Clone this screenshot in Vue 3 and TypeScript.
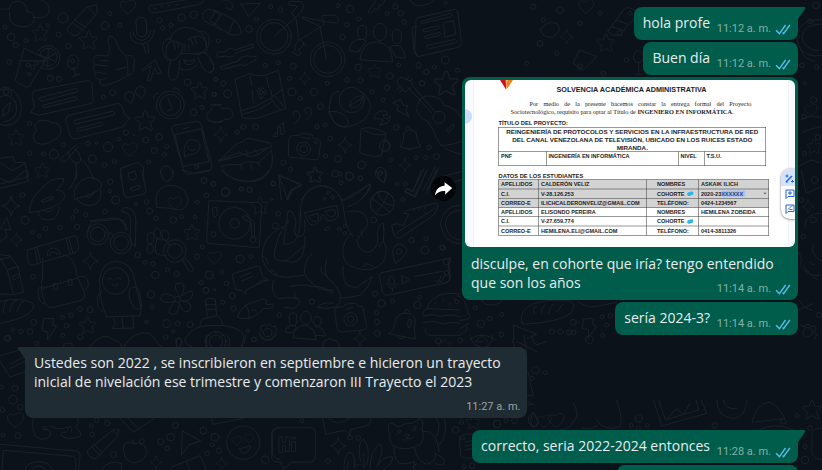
<script setup lang="ts">
interface Message {
  id: number
  out: boolean
  text: string
  time: string
  tail?: boolean
  media?: boolean
}

interface Patch {
  x: number
  y: number
  dots: number[][]
  stars: number[][]
  sparks: number[][]
  hearts: number[][]
  paths: string[]
}

const messages: Message[] = [
  { id: 1, out: true, text: 'hola profe', time: '11:12 a. m.', tail: true },
  { id: 2, out: true, text: 'Buen día', time: '11:12 a. m.' },
  { id: 3, out: true, text: 'disculpe, en cohorte que iría? tengo entendido que son los años', time: '11:14 a. m.', media: true },
  { id: 4, out: true, text: 'sería 2024-3?', time: '11:14 a. m.' },
  { id: 5, out: false, text: 'Ustedes son 2022 , se inscribieron en septiembre e hicieron un trayecto inicial de nivelación ese trimestre y comenzaron III Trayecto el 2023', time: '11:27 a. m.', tail: true },
  { id: 6, out: true, text: 'correcto, seria 2022-2024 entonces', time: '11:28 a. m.', tail: true },
]

const students = [
  { label: 'APELLIDOS', value: 'CALDERÓN VELIZ', label2: 'NOMBRES', value2: 'ASKAIK ILICH', shaded: true },
  { label: 'C.I.', value: 'V-28.126.253', label2: 'COHORTE', value2: '2020-23', marked: 'XXXXXX', pill: true, shaded: true },
  { label: 'CORREO-E', value: 'ILICHCALDERONVELIZ@GMAIL.COM', label2: 'TELÉFONO:', value2: '0424-1234567', shaded: true },
  { label: 'APELLIDOS', value: 'ELISONDO PEREIRA', label2: 'NOMBRES', value2: 'HEMILENA ZOBEIDA' },
  { label: 'C.I.', value: 'V-27.659.774', label2: 'COHORTE', value2: '', pill: true },
  { label: 'CORREO-E', value: 'HEMILENA.ELI@GMAIL.COM', label2: 'TELÉFONO:', value2: '0414-3811326' },
]

// Wallpaper patches; every patch is drawn at a third of its own units.
const patches: Patch[] = [
  {
    x: 0, y: 0,
    dots: [[189,54,15],[15,82,6],[33,111,11],[47,135,8],[78,121,6],[144,76,5],[176,104,8],[205,138,8],[315,77,12],[330,41,6],[360,76,6],[478,61,8],[488,84,6],[513,75,6],[545,53,11],[581,44,11],[28,186,7],[151,235,9],[177,237,8],[338,278,9],[310,291,6],[563,247,10],[648,238,6],[606,322,6],[581,337,10],[642,283,6],[89,371,6],[378,398,8],[357,418,5],[437,420,9],[478,411,10],[401,405,2],[264,431,7],[290,429,4],[324,441,14],[191,434,6],[162,463,14],[131,462,6],[89,461,6],[277,477,12],[314,494,7],[343,485,6],[463,452,9],[500,440,6],[493,464,6],[446,486,6],[218,183,6],[18,276,8],[590,501,6],[84,195,6],[98,202,6],[110,190,6],[88,222,5]],
    stars: [[121,100,24],[266,122,27],[436,363,30],[599,273,25],[48,414,24],[127,512,22]],
    sparks: [],
    hearts: [[385,20,24],[391,447,24]],
    paths: [
      'M0 28C10 26 20 26 27 29C28-4 80-8 81 36C104 34 112 60 92 74C76 86 45 80 34 66C28 56 27 46 29 36M81 0C90-10 150-4 148 30C146 50 125 58 99 51',
      'M204 82L262 21L290 14L292 40L237 101Q226 112 212 101Q198 92 204 82ZM216 67L249 91M223 59L256 82M262 21L287 45',
      'M72 146L46 240Q48 248 82 262Q90 260 94 248L139 178ZM62 182L132 183M113 154A36 36 0 1 1 123 202M119 164A27 27 0 1 1 127 192M145 145L143 202M120 165L167 184M122 185L168 160',
      'M204 185A16 16 0 1 1 234 187A16 16 0 1 1 204 185M220 202L228 225M216 230L240 222',
      'M324 167C336 145 320 126 326 112C335 102 347 115 351 132C359 156 384 167 382 184L384 225C364 240 337 251 316 256Q297 257 300 240C284 234 280 225 287 216C275 208 279 199 285 194C272 180 280 165 298 166ZM287 216L319 222M285 194L325 198M302 182L325 182M300 240L318 235M350 209L377 202M382 168Q400 162 403 178L401 212Q396 226 384 225',
      'M408 62A16 16 0 0 1 438 62L441 96A16 16 0 0 1 412 104ZM390 98Q390 131 427 132Q460 126 463 90M431 135L437 160M399 96Q404 120 427 121Q448 117 453 92M444 133L445 158',
      'M426 208L466 180L484 219L472 221L464 202L451 241L442 242L453 197L429 213Z',
      'M446 28Q446 14 460 16L590-6M447 30Q454 42 470 38L596 14Q614 7 610-3M462 26h8M482 20h8M503 17h8M525 15h8M608 44Q615 26 632 28L665 46M608 48Q606 60 620 66L665 90',
      'M510 120C516 92 543 78 570 84C600 90 620 110 618 136M504 182C480 160 480 112 513 116M596 94C630 90 636 120 616 160M498 168Q494 128 518 122L549 133Q548 170 520 180Q506 184 498 168M562 120Q600 92 620 128Q624 160 586 162M527 147L520 126M536 141L533 124M580 135L570 114M590 130L585 112M512 180Q496 230 516 241Q540 244 538 180M596 164Q622 142 640 195Q646 212 626 218Q608 212 594 172M538 205Q564 220 590 196M552 180Q568 188 584 178Q580 200 557 192ZM555 132v22M567 132v22M542 160L598 162',
      'M105 272L262 242Q274 241 276 253L280 300Q279 309 270 311L116 346L93 337L103 321L96 286Q97 276 105 272ZM120 293L230 265Q240 270 230 276L128 303Q116 304 120 293M128 316L226 290Q236 294 228 300L134 323Q124 324 128 316',
      'M207 346L355 310Q366 312 367 323L373 342L390 355L375 370Q373 380 365 382L225 417Q214 417 210 408L197 360Q197 348 207 346ZM224 361L338 334Q350 339 342 345L227 372Q216 368 224 361M234 385L302 367Q314 371 306 376L236 394Q226 392 234 385',
      'M388 305Q372 300 374 286Q384 268 399 279Q408 296 389 312M421 290Q404 286 407 270Q416 252 432 264Q444 276 422 298',
      'M469 315A42 42 0 1 0 553 315A42 42 0 1 0 469 315M479 315A32 32 0 1 0 543 315A32 32 0 1 0 479 315M504 296L516 326L503 334M462 297Q458 282 474 280M520 265Q534 260 539 275',
      'M0 268Q20 264 38 270Q64 290 64 324Q62 374 18 376L0 374M0 291Q30 274 48 310Q60 356 12 366M4 270Q2 258 20 262Q38 268 34 286M10 325L31 307L26 336L10 349Z',
      'M110 390Q96 380 114 364Q140 356 154 368Q184 366 182 395Q180 414 159 421Q137 440 108 428Q90 410 110 390',
      'M516 389Q512 380 523 376L590 364Q602 364 605 376L637 500Q635 510 625 514L564 523Q552 520 550 508ZM526 404L604 386L627 485L550 499ZM551 386L568 382M554 470Q545 430 572 418Q600 420 601 440Q596 464 570 464ZM561 438Q572 460 586 448M591 501L596 497',
      'M624 360Q612 344 632 331Q640 310 665 314M624 360Q640 370 665 366M0 475L39 470L45 488L74 487L86 530L0 552M0 488L37 512L76 490',
      'M182 475L230 434M182 475Q180 488 196 485L235 440M205 455Q210 484 228 490Q250 490 238 462L225 446M228 490L230 540M242 476Q264 490 282 540M362 505L413 487L430 500L432 540M362 505L364 540M384 520l22-7M480 520Q484 496 500 498Q520 504 519 528',
    ],
  },
  {
    x: 210, y: 0,
    dots: [[182,20,6],[211,30,7],[139,58,6],[117,87,10],[25,123,6],[384,17,6],[420,27,11],[446,57,6],[411,74,7],[398,111,8],[532,41,6],[556,20,8],[572,40,8],[582,66,7],[250,199,9],[205,188,6],[166,196,6],[239,235,6],[40,250,8],[18,239,6],[53,281,12],[14,283,6],[246,276,12],[312,276,11],[271,295,6],[352,250,6],[445,202,10],[451,241,8],[412,240,7],[539,228,10],[486,275,6],[519,299,6],[532,263,8],[566,195,6],[626,196,8],[649,216,8],[673,201,6],[706,180,12],[743,211,6],[636,250,8],[707,8,5],[331,320,9],[346,375,6],[321,380,6],[361,416,7],[100,381,8],[137,381,9],[82,397,6],[242,508,6],[221,488,8],[190,550,7],[46,576,12],[94,567,6],[119,569,8],[10,552,7],[347,468,6],[384,477,10],[376,521,10],[419,529,12],[451,535,7],[393,548,6],[455,495,12],[541,480,6],[511,519,7],[559,382,8],[618,473,6],[647,473,6],[657,443,7],[679,470,9],[586,552,6],[523,438,15],[687,352,18],[281,447,21],[281,447,11],[317,427,5],[154,277,6],[425,300,38],[192,110,52],[192,110,42],[353,178,52],[353,178,42]],
    stars: [[494,214,20],[709,251,36],[317,526,23]],
    sparks: [[285,236,20],[32,404,24],[405,435,24],[585,496,20]],
    hearts: [],
    paths: [
      'M92 12L152 10L115 50Q108 30 92 12ZM38 0Q58-2 70 18Q66 38 48 22M0 62L60 104Q80 108 95 100Q92 76 72 58L10 28M16 36L0 58M32 44L14 74M72 62L56 98',
      'M192 110L272 38Q288 14 272 5L240 4Q232 10 240 18Q252 12 262 20L244 38L258 54L266 122L332 80L276 54M330 80L349 176M332 82L342 72L338 56Q330 46 345 46L376 45Q390 55 382 68Q360 70 276 50M266 122Q250 136 256 150L248 158L266 168L272 157L264 148Q284 140 280 128M272 120L290 138',
      'M474 36L498 2M474 36Q484 42 488 34L494 25L504 30L508 16L520 12L524 0M600 0Q610 18 630 18Q660 14 672 0',
      'M490 96A20 26 0 1 1 530 96A20 26 0 1 1 490 96M443 97A14 17 0 1 1 470 97A14 17 0 1 1 443 97M547 110A14 17 0 1 1 574 110A14 17 0 1 1 547 110M450 178Q456 124 500 126Q548 130 548 185ZM418 151Q420 116 456 118Q474 122 466 130Q452 140 446 155ZM540 142Q550 134 564 136Q584 146 586 175L556 171Q552 152 540 142',
      'M620 54L736 28Q742 30 744 40L755 128Q752 140 744 142L624 170Q616 166 614 158ZM620 80L606 82L612 148L622 168M634 64L722 40Q732 44 724 50L640 70Q630 70 634 64M640 88L686 77Q694 82 686 86L644 96Q636 94 640 88M646 108L690 97Q698 102 690 106L650 115Q640 114 646 108M652 136L736 118Q744 122 738 128L658 146Q648 144 652 136M702 68L730 62L738 102L706 112Z',
      'M20 168Q18 156 32 156L45 156Q58 138 75 150L128 132L130 142L78 158Q66 178 48 168L22 172M32 200L86 182Q94 166 114 168L138 170L138 180L122 186Q110 202 92 194L38 208Q30 210 32 200M0 180Q10 186 12 206Q8 218 0 220',
      'M76 238L118 221Q150 232 170 224L205 211L228 325L139 356L98 354ZM92 333L140 318L182 295L216 268M100 342L148 328L184 306M182 295L212 332M196 288L222 320M120 228l6 30M126 270l4 40M170 232l6 30M182 270l5 20M153 296Q136 274 146 266Q162 258 168 276Z',
      'M0 316Q20 306 36 325Q66 320 70 344Q66 360 44 358Q22 374 0 362M252 348Q242 330 264 334Q280 350 254 371M288 340Q276 318 300 324Q316 340 288 360M190 408Q196 394 203 400L203 379L220 368L222 392Q228 404 212 404L211 380L203 386L203 408Q194 414 190 408',
      'M386 274Q360 276 362 306Q355 320 358 334Q370 384 410 382Q480 366 482 320Q476 284 446 270M356 334Q410 330 416 372Q402 390 374 368Q358 350 356 334M418 314Q430 284 458 288Q458 320 428 324ZM418 318L462 290M493 356Q494 334 520 332Q534 334 532 346L520 344Q520 356 534 358L540 346Q544 360 534 368L510 376L520 358Q505 356 493 356',
      'M562 250Q560 234 574 232L604 244L608 258L676 336M594 262L665 338M562 250L584 276L602 264M620 320Q630 284 660 288Q698 292 702 316Q740 320 770 376M618 325Q622 350 655 365Q670 390 680 416Q700 460 780 466M690 436Q720 440 780 414M710 390L730 372L733 380L716 396ZM568 262l-8 8M576 270l-8 8M590 238l8-10M600 243l8-8M549 308L572 298L580 316L594 316L588 330L598 350L560 330L566 318Z',
      'M26 482L80 432L100 424Q110 410 130 418L182 430Q190 440 180 442L26 484M26 482L84 458L100 462L118 470L144 464L180 440M34 500Q40 492 90 494L112 484L146 488L184 452Q194 484 176 518Q152 550 110 544Q50 540 34 500M85 452l12 12M108 450l6 20M134 448l10 14M92 494l4 14M122 488l2 18M142 488l8 10',
      'M237 418Q238 408 248 406L268 406L276 400L306 404L310 414L326 418Q332 424 331 432L326 472Q324 480 316 479L240 472Q234 468 235 462ZM274 412L300 416M454 386Q490 376 528 400L514 466Q490 476 450 458ZM460 390Q500 412 528 402M518 420Q540 416 541 440Q536 458 514 456M570 440Q584 428 580 402Q594 378 618 398Q620 424 632 440Q590 452 570 440M585 388Q592 372 602 386M590 446Q600 456 608 446',
      'M206 526L276 556L240 574L230 600M206 526L214 600M274 600Q300 554 345 558Q380 566 396 600M398 600L480 552Q478 574 450 600M497 528Q490 508 510 502Q526 504 528 518L524 548ZM584 574L614 588L650 514M584 574L590 566L608 576L642 506M650 580L686 504M640 570L676 500M696 530L780 508M716 550L780 532M486 600Q490 574 518 574Q546 580 552 600',
    ],
  },
  {
    x: 0, y: 170,
    dots: [[67,75,7],[75,151,12],[98,186,6],[137,176,7],[118,199,5],[180,173,7],[218,143,6],[228,123,6],[257,134,6],[231,171,8],[331,35,8],[330,63,5],[347,90,12],[315,125,7],[408,102,5],[440,96,7],[449,123,9],[468,145,7],[520,150,10],[545,140,6],[585,141,5],[592,96,6],[612,32,9],[640,42,7],[619,76,7],[677,67,13],[725,57,6],[749,59,8],[820,41,7],[835,131,7],[826,167,9],[815,88,4],[607,231,6],[591,260,8],[720,267,12],[753,259,6],[413,255,8],[435,277,6],[459,282,7],[502,300,6],[466,315,11],[530,312,8],[628,315,12],[666,306,6],[604,338,6],[618,361,9],[645,359,3],[680,340,7],[453,373,11],[456,412,6],[697,378,9],[669,397,6],[700,415,8],[439,456,5],[500,461,12],[533,461,7],[570,464,9],[520,485,5],[99,320,7],[240,417,7],[270,419,9],[214,436,7],[187,442,6],[200,467,7],[188,496,6],[241,501,8],[101,457,9],[90,485,9],[63,485,7],[38,479,5],[21,505,8],[110,520,6],[838,435,7],[744,483,5],[762,508,7],[936,395,8],[704,160,14],[704,160,48],[640,193,8],[759,209,9],[648,515,30],[648,515,20],[1020,12,6],[1048,18,12],[1082,25,7],[1190,42,5],[1209,89,6],[1121,150,9],[1235,211,8],[1278,206,6],[1275,241,12],[1329,233,8],[1197,245,8],[1259,382,6],[1252,405,11],[1131,456,8],[1125,371,8],[1144,400,11],[1178,394,6],[1132,490,9],[1371,395,6],[1130,428,6],[1018,177,5],[1035,190,5],[1035,167,5],[985,68,5],[998,82,5],[974,86,4],[293,193,32],[293,193,22],[363,219,32],[363,219,22],[347,333,40],[525,243,34],[525,243,22],[1147,100,36],[1052,448,20],[1052,448,10],[533,388,9]],
    stars: [[944,16,24],[780,108,26],[576,188,24],[263,467,25],[1334,527,20]],
    sparks: [[33,108,30],[49,210,21],[271,273,26],[1080,506,22]],
    hearts: [[645,262,22],[526,98,22]],
    paths: [
      'M88 122Q94 80 120 62Q150 20 190 26Q196 40 168 60Q200 62 194 84Q170 120 88 128ZM124 92L152 80Q164 80 158 86L134 96Q122 98 124 92M114 126Q118 150 146 150Q176 148 178 110M132 120Q140 132 156 120M222 84Q220 30 270 22Q310 30 304 50Q296 70 222 88M232 88Q246 110 278 106Q308 96 302 60M256 78Q270 92 282 66M206 58Q226 40 230 0M0 55L84 34L78 0M0 25L30 38L78 0',
      'M82 240L220 198Q230 196 232 206L236 238Q232 246 224 248L96 286Q88 286 85 276ZM104 236L114 282M112 232L122 278M198 204L210 250M206 202L218 248M128 262L128 320Q118 360 136 400Q144 416 162 412L240 392Q256 386 254 370L232 320Q226 260 190 254M142 258Q140 234 162 234Q180 236 180 254M148 256Q154 236 172 252M128 355L234 324M132 350Q110 350 114 366Q116 400 134 402M236 320Q260 314 264 336Q268 358 250 360M162 340h10v18h-10ZM206 328h10v18h-10Z',
      'M264 185Q266 162 276 155L350 148Q370 148 378 180L382 178Q376 144 342 144L268 152M325 190Q332 182 344 204M366 124Q366 108 386 114Q406 124 408 150L406 230L390 212L392 150Q390 128 366 124',
      'M320 440Q300 400 298 330Q306 274 350 274Q398 280 404 330L424 420L420 436ZM304 364Q288 370 294 410Q302 432 312 420M388 360Q400 342 416 358L426 410Q420 424 402 412Q384 390 388 360M340 444L346 460L338 476L402 474L398 440M366 444L370 474M322 330q8-10 16 0M346 328q8-10 18 0M336 342Q348 354 354 340',
      'M362 10L372 74Q376 84 388 82L432 72Q440 66 438 58L424 0M386 10Q382 30 402 30Q414 22 406 8M392 54L416 46Q424 48 418 56L398 62Q390 62 392 54M482 0Q484 32 500 34Q520 30 520 0M470 112Q458 60 500 46Q560 44 564 90Q562 116 540 120Q500 112 470 112M545 0L580 10L630 0M662 0Q700 38 750 34Q790 28 808 0',
      'M510 230Q500 200 470 208Q462 240 470 252L500 258M442 206a10 14 20 1 0 20-4a10 14 20 1 0-20 4M462 190a10 14-10 1 0 20 0a10 14-10 1 0-20 0M486 196a10 14-10 1 0 20 0a10 14-10 1 0-20 0M440 236a10 14 0 1 0 20 0a10 14 0 1 0-20 0M546 268L566 302Q580 312 580 296L556 264',
      'M628 92L778 98Q786 100 785 110L778 228Q776 234 768 233L626 220Q618 218 620 206ZM640 112h10l2 22l-8 10l-6-12ZM728 140L736 136L764 158L764 200L756 202L754 160L730 146Z',
      'M538 378Q510 336 544 340Q560 344 545 378Q580 350 578 374Q572 398 545 392Q588 400 566 424Q548 432 538 400Q536 440 512 432Q498 422 526 394Q484 404 482 384Q486 360 522 380',
      'M698 312L772 288Q782 290 782 300L788 320L804 330L770 344L738 360L736 372L726 362L708 358ZM722 320L752 308M726 332L756 320M770 344L784 330L804 332M712 440Q728 400 770 394Q790 382 800 392L798 404L820 402L818 414L790 416Q760 450 726 446ZM746 448Q752 420 734 404M756 420q8-4 14 6',
      'M902 146Q894 60 960 46Q1024 54 1030 110Q1036 180 1060 200M900 126Q908 230 850 222Q860 170 864 124Q880 116 888 156Q880 190 890 198Q920 210 914 150M866 154Q840 180 830 220Q820 250 824 264Q850 284 870 264L914 226M850 170Q780 200 788 270Q806 324 860 322L912 316M915 200Q916 300 850 270M936 250Q900 290 920 324Q960 370 1000 360M980 270Q966 320 996 336Q1040 380 1010 410Q980 420 952 412Q970 394 998 400M1030 92Q1060 84 1108 42Q1120 48 1096 74Q1070 104 1044 110M1046 124Q1100 114 1104 160Q1096 180 1070 210Q1080 250 1110 246Q1140 230 1132 190Q1136 160 1150 160Q1154 180 1150 212Q1168 240 1150 276Q1120 310 1066 294Q1020 280 1030 230Q1040 200 1056 190M1030 288Q1024 320 1040 344Q1072 360 1082 344L1116 320Q1110 350 1080 376Q1050 384 1020 384M820 330Q810 370 836 386Q870 380 894 386Q908 400 880 416L852 412M914 128L1010 106L1016 138Q1000 158 980 150L972 134L964 136Q964 160 938 166Q920 160 914 128ZM926 138L954 130L956 148Q940 166 926 138ZM976 124L1004 118L1006 134Q990 152 976 124ZM974 180Q980 166 990 172Q988 186 974 180M870 350Q900 340 940 350Q980 350 1000 370M788 260q14 0 14 20M808 304q12-10 26 14M886 370q-10 10 10 18M1090 200q-12-10-4-20M1138 230q4-14 14-18M964 290Q958 310 978 316M1090 290q6-18 30 0',
      'M838 16L906 44L880 56L864 88ZM864 88L876 56M1176 166Q1190 156 1210 168L1226 132L1212 130L1220 122L1310 98Q1320 110 1300 136L1200 204Q1190 208 1182 194ZM1190 188L1304 116M1240 126l4-8M1256 122l4-8M1274 116l4-8M1130 0Q1128 20 1150 38Q1164 20 1156 0M1138 6q6 10 10 0M1214 66L1246 82L1280 0M1214 66L1222 54L1240 64L1264 0M1280 60L1310 0M1186 280Q1166 230 1196 222Q1220 226 1220 244Q1216 260 1186 280M1116 84L1170 126M1126 130Q1150 110 1164 70M1134 66Q1140 100 1180 108M1380 106Q1330 106 1322 160Q1330 220 1380 222M1380 120Q1336 126 1336 164Q1344 206 1380 210',
      'M1146 308L1352 264L1346 288L1352 320Q1352 334 1340 338L1162 376Q1152 378 1148 366L1138 320Q1138 310 1146 308ZM1206 318L1230 328L1208 342ZM1242 320L1328 304M1166 328Q1172 310 1182 326L1184 340Q1176 350 1168 340ZM1162 342Q1176 370 1190 342M1178 356v8M1306 332l8 6l10-20M1318 332l6 4l10-20',
      'M576 530Q540 516 562 498Q580 466 640 466Q720 464 732 500L726 530M600 470Q600 450 612 446L650 438Q664 440 668 464M616 390Q630 380 646 388L650 436M616 390L622 444M618 404h28M620 418h28M530 530Q522 500 540 504Q550 516 540 530M614 514h8M674 514h8M648 484v6M626 494l5 5M668 494l-5 5',
      'M782 470l12-6 6 4 8-6 8 8 10-2 4 14-4 6 4 8-10 6-6 8-10-2-8 2-8-8-8-2-2-10 6-6ZM790 488a13 13 0 1 0 26 0a13 13 0 1 0-26 0M902 444A16 20 0 1 1 934 444A16 20 0 1 1 902 444M880 502Q882 466 914 466Q946 470 948 508ZM868 448A12 14 0 1 1 890 448A12 14 0 1 1 868 448M940 454A12 14 0 1 1 964 454A12 14 0 1 1 940 454M856 486Q858 464 884 466L888 472L876 488ZM946 470Q972 468 976 498L950 496',
      'M1004 422Q1004 412 1014 412L1030 410L1038 402L1066 400L1074 408L1088 410L1100 470Q1098 480 1088 480L1024 486Q1014 482 1012 476ZM1038 418L1058 412M1166 490Q1186 480 1186 450Q1196 430 1212 430Q1240 426 1246 450Q1240 480 1246 506ZM1214 430Q1212 418 1222 418Q1232 422 1228 430M1226 448Q1236 444 1234 460L1228 474Q1220 472 1226 448M1190 498Q1200 514 1216 500M1380 372Q1300 360 1280 416L1380 420M1280 416Q1264 424 1270 438Q1300 430 1320 440Q1350 430 1380 440M1270 458Q1300 450 1330 462Q1360 454 1380 460M1276 476Q1272 488 1290 496L1380 496M1306 398v6M1330 386v6M1350 400v6M1366 384v6',
      'M0 254L30 258L54 290L70 366L40 374L0 372M0 264L22 300L40 374M22 300L54 290M0 268L30 262M36 320L58 310L60 318L42 330ZM0 180L20 142L32 180L14 178L22 200L0 216M0 394Q60 380 100 400Q110 440 0 460M10 430Q10 396 22 392M30 424Q32 394 50 390M50 424Q60 400 72 392M132 446L162 446L158 466L170 468L142 510L144 486L128 482ZM270 530Q310 480 340 510Q364 516 366 530M372 530Q400 480 450 490L484 530M190 530L194 520L216 520L216 530M970 530Q968 510 980 510Q990 500 998 512Q1010 504 1020 530',
    ],
  },
  {
    x: 0, y: 335,
    dots: [[24,10,9],[45,160,9],[5,156,6],[39,194,13],[61,216,8],[8,225,7],[9,300,6],[54,302,9],[322,265,8],[290,256,7],[274,272,6],[277,299,7],[526,271,9],[512,307,11],[482,320,9],[502,340,7],[610,287,10],[645,307,12],[636,330,6],[657,347,8],[622,355,7],[341,359,9],[795,374,11],[730,323,50],[497,6,7],[762,14,7]],
    stars: [],
    sparks: [[468,382,20],[665,386,20]],
    hearts: [[48,254,26],[711,317,16],[748,309,16]],
    paths: [
      'M0 62L56 46M0 78L30 126L76 110M28 88L74 66M30 100L76 78M100 250Q90 300 120 312Q154 316 152 290Q144 280 130 284Q124 270 140 276M232 250Q240 270 226 276Q248 296 240 304Q204 318 184 302Q180 290 198 292L206 276Q220 270 214 290M150 272Q176 288 202 276',
      'M264 345L340 284L358 284L352 304L290 370Q276 374 264 358ZM276 336L300 362M284 330L308 354M340 286L352 300M360 250L400 292L460 252M384 250L410 276M404 326Q370 310 370 344Q374 380 402 384Q440 378 440 346Q432 316 404 326M404 326Q400 316 394 314M420 326Q414 308 432 312Q436 324 420 330',
      'M548 288L602 318L566 330L545 360ZM0 328L230 348Q242 352 240 364L236 405M10 346L220 364Q230 366 228 376L226 405M10 346L6 405M74 405Q80 382 114 380Q150 380 158 405M92 405Q114 380 140 405M302 405Q330 370 366 386L364 405M510 405L520 394L600 362L620 405M560 380l10 24M718 342L752 332Q748 354 732 354Q720 352 718 342M635 250L638 268L730 250M840 278Q816 280 818 296L818 360Q830 376 840 372M620 0Q612 14 620 40M680 0Q700 20 680 40M736 0Q740 22 716 38M532 38Q522 10 540 10Q554 20 540 38M780 0L790 14L810 16L824 0',
    ],
  },
  {
    x: 270, y: 335,
    dots: [[571,17,8],[505,18,8],[762,108,8],[797,106,11],[786,130,6],[826,113,6],[681,267,11],[708,257,6],[575,262,6],[557,285,10],[577,309,6],[240,308,7],[265,309,7],[174,378,7],[734,257,9],[96,257,6],[388,288,4],[434,278,4]],
    stars: [[610,262,22]],
    sparks: [[205,333,26]],
    hearts: [[824,258,22]],
    paths: [
      'M20 278L120 278Q136 280 136 292L136 368Q134 380 122 381L62 382L40 405L34 382L16 380Q4 376 5 364L5 292Q8 280 20 278ZM28 306h10v16h10v-18h10v46h-12v-18h-8v20h-10ZM66 320h10v30h-10ZM66 306h10v6h-10Z',
      'M158 250L168 298Q200 290 224 286L240 300L242 284L290 272Q306 264 302 250M176 250Q200 276 242 250M222 405Q220 370 236 352Q256 350 254 400M250 396Q270 380 282 396M272 380Q260 320 280 312Q304 340 290 390M300 400Q300 346 330 326Q346 340 322 392M318 398Q340 360 368 366Q370 384 340 405M232 404L236 380M284 400L280 356',
      'M360 300Q346 264 366 264L384 276Q406 262 430 264L450 250Q464 262 456 282Q470 320 440 334Q400 350 370 332Q356 320 360 300M404 300q8-6 14 0l-6 8ZM412 308Q412 320 400 314M412 308Q420 318 430 306M378 300q4-10 12-6M424 288q8-10 14 0M372 336Q370 366 386 384Q410 390 434 380L430 405M434 340Q440 380 470 388Q500 380 496 355L520 370Q530 390 510 390L496 386M458 288Q500 284 508 350M498 250Q516 270 500 302M524 250Q534 300 508 330M440 405Q420 396 440 386',
      'M570 306Q572 298 584 298L620 296M568 306L572 362Q576 370 590 370L620 368M586 320l30-4M586 332l30-4M586 344l30-4M786 276Q776 250 792 234Q808 262 802 272Q794 280 786 276M772 180L790 184L774 110M772 200L792 208L770 210M600 0Q606 34 640 38Q670 30 668 0M636 20L616 20L634 2L654 20M732 4Q720 20 744 50M762 0L770 50M740 20L800 50M790 0Q780 14 800 30L828 20',
    ],
  },
  {
    x: 460, y: 400,
    dots: [[536,55,11],[514,77,6],[535,85,6],[562,76,6],[111,72,11],[764,76,8],[1011,47,6],[970,64,8],[1035,180,11],[1035,140,6],[1050,84,7],[12,200,6],[36,198,8]],
    stars: [[1056,30,28]],
    sparks: [],
    hearts: [[290,60,25]],
    paths: [
      'M208 70Q198 52 220 36Q240 66 232 74Q220 84 208 70M340 10Q360 40 344 60Q330 90 300 90M410 60Q430 96 480 80Q490 60 470 0M366 84Q390 90 410 78M580 0L606 78L740 40L724 0M596 0L616 60L716 30L708 0M616 60L650 26L670 44L690 10M770 0Q770 50 820 56Q860 50 860 0M790 0Q796 30 830 26M876 66Q890 10 930 6Q956 20 974 54ZM900 90Q940 64 1000 90M1086 84Q1060 82 1056 100L1056 160Q1060 176 1086 180',
    ],
  },
  {
    x: 420, y: 245,
    dots: [[66,8,7],[80,50,10],[80,84,7],[166,188,6],[210,221,7],[182,236,11],[246,208,6],[244,268,7],[460,232,9],[461,262,7],[396,260,8],[422,260,8],[447,262,8],[546,216,6],[572,212,7],[560,240,6],[508,284,12],[548,272,6],[1198,210,8],[1163,262,14]],
    stars: [],
    sparks: [],
    hearts: [],
    paths: [
      'M84 48L90 102Q86 112 76 114M120 268Q144 260 140 246M144 206Q136 150 110 152M144 206Q160 214 140 224L120 226M120 250L146 236M186 166Q190 180 210 180Q240 180 246 166',
      'M304 226Q300 196 340 176Q400 160 450 168Q470 180 454 204Q420 232 310 238ZM344 208Q336 184 350 184M364 204Q366 184 376 180M386 206Q388 184 402 178M410 200Q420 190 428 178M474 170Q500 190 530 184L590 172M492 222L520 220L518 238L530 244L504 280L506 254L488 250ZM282 284L280 240L350 268L324 280M150 284Q180 256 226 284M1138 166Q1150 190 1176 196M1134 196L1180 176M1140 240l14 6 4-8h10l4 8 12-4 4 10-4 10 6 8-6 12M1134 20Q1150 40 1140 60Q1170 100 1200 90M1180 0Q1170 30 1206 50M1150 60Q1160 80 1190 104M1170 50q6 14 14 8',
    ],
  },
  {
    x: 520, y: 0,
    dots: [[40,20,8],[70,60,6],[120,30,10],[180,70,7],[240,40,6],[300,100,8],[320,180,7],[60,130,9],[110,160,6],[180,200,8],[250,220,7],[20,190,6],[330,40,6]],
    stars: [[258,130,26]],
    sparks: [[140,110,22]],
    hearts: [[200,18,24]],
    paths: ['M264 94L310 30Q324 16 342 30Q354 44 340 58L300 104Q280 112 264 94ZM276 80L312 92M290 60L326 74M60 90Q80 60 110 70Q130 90 100 110Q70 116 60 90M180 150L230 170L190 210L160 190ZM340 170a15 18 0 1 0 30 0a15 18 0 1 0-30 0M356 188v34M346 224h20'],
  },
  {
    x: 798, y: 0,
    dots: [[54,16,10],[36,64,7],[12,196,7],[56,202,7],[20,250,5],[46,300,10],[18,350,7],[60,412,8],[20,460,6],[50,540,10],[10,600,7],[46,660,9],[16,710,7]],
    stars: [[48,440,22]],
    sparks: [[30,620,20]],
    hearts: [[40,330,20]],
    paths: ['M72 60Q6 54-4 110Q0 164 50 168L72 166M72 72Q14 72 12 112Q20 150 60 152M8 150Q20 180 50 184M8 360Q40 340 72 354M10 400Q30 386 72 380M0 500L40 480L72 490M10 510L24 580L72 560M20 680Q20 640 72 640'],
  },
]
</script>

<template>
  <main class="chat">
    <svg class="wallpaper" aria-hidden="true">
      <defs>
        <path id="w-star" d="M-1-10Q0-11 1-10L3-4L9-4Q10-3 9-2L5 2L7 8Q7 10 5 9L0 6L-5 9Q-7 10-6 8L-5 2L-10-2Q-10-4-9-4L-3-4Z" />
        <path id="w-spark" d="M0-10Q1-2 9 0Q1 2 0 10Q-1 2-9 0Q-1-2 0-10Z" />
        <path id="w-heart" d="M-1 9Q-10 2-10-3Q-8-9-2-5Q4-11 9-5Q10 2-1 9Z" />
      </defs>
      <g v-for="(p, i) in patches" :key="i" :transform="`translate(${p.x} ${p.y}) scale(0.3333)`">
        <circle v-for="(c, n) in p.dots" :key="'c' + n" :cx="c[0]" :cy="c[1]" :r="c[2]" />
        <use v-for="(s, n) in p.stars" :key="'s' + n" href="#w-star" :transform="`translate(${s[0]} ${s[1]}) scale(${s[2] / 10})`" />
        <use v-for="(s, n) in p.sparks" :key="'k' + n" href="#w-spark" :transform="`translate(${s[0]} ${s[1]}) scale(${s[2] / 10})`" />
        <use v-for="(s, n) in p.hearts" :key="'h' + n" href="#w-heart" :transform="`translate(${s[0]} ${s[1]}) scale(${s[2] / 10})`" />
        <path v-for="(d, n) in p.paths" :key="'p' + n" :d="d" />
      </g>
    </svg>

    <div
      v-for="m in messages"
      :key="m.id"
      class="row"
      :class="{ out: m.out, first: m.tail }"
    >
      <button v-if="m.media" class="forward" type="button" aria-label="Reenviar">
        <svg viewBox="0 0 25 25" aria-hidden="true">
          <path d="M13.6 6.2 21.2 12 14.2 18.4V15.1C9.6 14.7 6.6 16.2 4 19.6 4.6 14 7.6 10.3 13.6 9.8Z" />
        </svg>
      </button>

      <article class="bubble" :class="{ media: m.media }">
        <svg v-if="m.tail" class="tail" viewBox="0 0 8 12" aria-hidden="true">
          <path d="M0 0H6.4Q8 .4 7.2 1.8L0 12Z" />
        </svg>

        <svg v-if="m.media" class="photo" viewBox="0 0 1320 668">
          <foreignObject width="1320" height="668">
            <div class="doc">
              <svg class="emblem" viewBox="0 0 26 20" aria-hidden="true">
                <path fill="#c9141d" d="M0 0H12V19Z" />
                <path fill="#f57c1f" d="M12 0H26L13 19Z" />
                <path fill="#f9b36b" d="M11 0H16L12 9Z" />
              </svg>
              <div class="sheet">
                <h2>SOLVENCIA ACADÉMICA ADMINISTRATIVA</h2>
                <p class="intro">
                  Por medio de la presente hacemos constar la entrega formal del Proyecto
                  Sociotecnológico, requisito para optar al Título de <b>INGENIERO EN INFORMÁTICA</b>.
                </p>
                <h3>TÍTULO DEL PROYECTO:</h3>
                <table class="project">
                  <colgroup><col class="a" /><col class="b" /><col class="c" /><col class="d" /></colgroup>
                  <tbody>
                    <tr>
                      <td colspan="4" class="name">
                        REINGENIERÍA DE PROTOCOLOS Y SERVICIOS EN LA INFRAESTRUCTURA DE RED<br />
                        DEL CANAL VENEZOLANA DE TELEVISIÓN, UBICADO EN LOS RUICES ESTADO<br />
                        MIRANDA.
                      </td>
                    </tr>
                    <tr class="program">
                      <td>PNF</td>
                      <td>INGENIERÍA EN INFORMÁTICA</td>
                      <td>NIVEL</td>
                      <td>T.S.U.</td>
                    </tr>
                  </tbody>
                </table>
                <h3>DATOS DE LOS ESTUDIANTES</h3>
                <table class="students">
                  <colgroup><col class="a" /><col class="b" /><col class="c" /><col class="d" /></colgroup>
                  <tbody>
                    <tr v-for="(s, i) in students" :key="i" :class="{ shaded: s.shaded }">
                      <td>{{ s.label }}</td>
                      <td>{{ s.value }}</td>
                      <td class="mid">{{ s.label2 }}<i v-if="s.pill" class="pill"></i></td>
                      <td>{{ s.value2 }}<mark v-if="s.marked">{{ s.marked }}</mark><i v-if="s.marked" class="caret"></i></td>
                    </tr>
                  </tbody>
                </table>
              </div>
              <i class="knob"></i>
              <svg class="tools" viewBox="0 0 28 100" aria-hidden="true">
                <path fill="#fff" d="M28 0H18Q0 2 0 20V80Q0 98 18 100H28Z" />
                <path fill="#d3e3fd" d="M28 0H18Q0 2 0 20V34H28Z" />
                <g fill="none" stroke="#2463d6" stroke-width="2">
                  <path stroke-width="3" d="M10 26 22 14M10 26h3" />
                  <path d="M12 11v6M9 14h6M23 22v5M20 25h6" />
                  <path d="M10 42H26V55H14L10 59ZM18 44v8M14 48h8" />
                  <path d="M10 72H26V85H14L10 89ZM14 81 21 74M17 81h6M22 73l2 2" />
                </g>
              </svg>
            </div>
          </foreignObject>
        </svg>

        <p class="text">{{ m.text }}<span class="spacer"></span></p>
        <div class="meta">
          <time>{{ m.time }}</time>
          <svg v-if="m.out" class="ticks" viewBox="0 0 16 11" aria-label="Leído">
            <path d="M1 6.2 4.4 9.6 10.6 1M7.6 8.6 8.6 9.6 14.8 1" />
          </svg>
        </div>
      </article>
    </div>

    <div class="row out">
      <article class="bubble next"></article>
    </div>
  </main>
</template>

<style>
body {
  margin: 0;
  background: #0b141a;
}
</style>

<style scoped>
.chat {
  position: relative;
  box-sizing: border-box;
  height: 100vh;
  overflow: hidden;
  padding: 7px 24px 0 25px;
  display: flex;
  flex-direction: column;
  gap: 2px;
  background: #0b1219;
  font-family: "Open Sans", "Noto Sans", sans-serif;
  color: #e9edef;
}

.wallpaper {
  position: absolute;
  inset: 0;
  width: 100%;
  height: 100%;
  fill: none;
  stroke: #1a2228;
  stroke-width: 3;
  stroke-linecap: round;
  stroke-linejoin: round;
}

.wallpaper use {
  stroke-width: 1;
}

.row {
  position: relative;
  flex: none;
  display: flex;
  align-items: center;
  gap: 6px;
}

.row.out {
  justify-content: flex-end;
}

.row + .row.first {
  margin-top: 10px;
}

.bubble {
  position: relative;
  box-sizing: border-box;
  max-width: 65%;
  padding: 6px 7px 8px 9px;
  border-radius: 8px;
  background: #202c33;
}

.out .bubble {
  background: #005c4b;
}

.bubble.media {
  width: 336px;
  padding-top: 3px;
}

.bubble.next {
  width: 181px;
  height: 33px;
}

.first .bubble {
  border-top-left-radius: 0;
}

.out.first .bubble {
  border-top-left-radius: 8px;
  border-top-right-radius: 0;
}

.tail {
  position: absolute;
  top: 0;
  right: 100%;
  width: 8px;
  height: 12px;
  fill: #202c33;
  transform: scaleX(-1);
}

.out .tail {
  right: auto;
  left: 100%;
  fill: #005c4b;
  transform: none;
}

.text {
  margin: 0;
  font-size: 14px;
  line-height: 19px;
}

.spacer {
  display: inline-block;
  width: 61px;
  height: 1px;
}

.out .spacer {
  width: 81px;
}

.meta {
  position: absolute;
  right: 7px;
  bottom: 4px;
  display: flex;
  align-items: center;
  gap: 4px;
  font-family: Roboto, "Open Sans", sans-serif;
  font-size: 11px;
  line-height: 14px;
  color: #98a2a6;
}

.out .meta {
  color: #83b1a8;
}

.ticks {
  width: 16px;
  height: 11px;
  fill: none;
  stroke: #53bdeb;
  stroke-width: 1.4;
}

.forward {
  flex: none;
  width: 25px;
  height: 25px;
  padding: 0;
  border: 0;
  border-radius: 50%;
  background: #030608;
}

.forward svg {
  display: block;
  fill: #fff;
}

.photo {
  display: block;
  width: 330px;
  margin: 0 0 7px -6px;
  border-radius: 6px;
}

/* The scanned page is laid out at four times its size in the bubble. */
.doc {
  position: relative;
  box-sizing: border-box;
  height: 668px;
  padding: 0 24px 0 34px;
  background: #f8fafd;
  overflow: hidden;
  font-family: "Liberation Sans", Arial, sans-serif;
  font-weight: 700;
  font-size: 22px;
  line-height: 32px;
  color: #1c1c1c;
}

.sheet {
  box-sizing: border-box;
  height: 668px;
  padding: 20px 84px 0 98px;
  border: solid #e4e6ea;
  border-width: 0 2px;
  background: #fff;
}

.doc h2 {
  margin: 0 12px 22px 0;
  font-size: 29px;
  line-height: 36px;
  text-align: center;
}

.intro {
  margin: 0 64px 16px 48px;
  font: 25px/32px "Liberation Serif", "Times New Roman", serif;
  text-align: justify;
  text-indent: 76px;
}

.doc h3 {
  margin: 0;
  font-size: 23px;
  line-height: 30px;
}

.doc table {
  border-collapse: collapse;
  table-layout: fixed;
}

.doc td {
  padding: 0 0 0 8px;
  border: 2px solid #333;
  white-space: nowrap;
}

.project {
  width: 1070px;
  margin-bottom: 24px;
}

.project .a { width: 190px; }
.project .b { width: 528px; }
.project .c { width: 104px; }

.project .name {
  padding: 0;
  font-size: 25px;
  text-align: center;
}

.program {
  height: 56px;
  vertical-align: top;
}

.students {
  width: 1082px;
  line-height: 35px;
}

.students .a { width: 160px; }
.students .b { width: 432px; }
.students .c { width: 208px; }

.students .mid {
  padding-left: 40px;
}

.shaded {
  background: #d3d3d3;
}

.doc mark {
  padding-right: 8px;
  background: #a9c2f3;
  color: #24407c;
}

.pill {
  display: inline-block;
  width: 26px;
  height: 14px;
  margin-left: 10px;
  border-radius: 8px;
  background: #27b6ef;
  transform: rotate(-20deg);
}

.caret {
  float: right;
  margin: 14px 8px 0 0;
  border: 6px solid transparent;
  border-top-color: #555;
  border-bottom-width: 0;
}

.emblem {
  position: absolute;
  top: 0;
  left: 140px;
  width: 52px;
  height: 40px;
}

.knob {
  position: absolute;
  top: 116px;
  left: -32px;
  width: 60px;
  height: 60px;
  border-radius: 50%;
  background: #c9dafb;
}

.tools {
  position: absolute;
  top: 356px;
  right: 0;
  width: 56px;
  height: 200px;
  filter: drop-shadow(0 2px 5px #777);
}
</style>
